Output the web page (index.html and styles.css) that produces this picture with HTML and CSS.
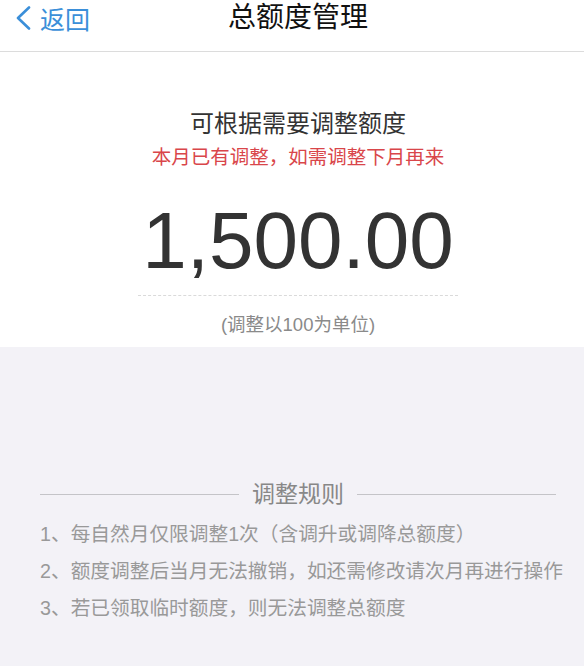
FILE: index.html
```html
<!DOCTYPE html>
<html lang="zh-CN">
    <head>
        <meta charset="UTF-8">
        <meta name="viewport" content="width=device-width, initial-scale=1.0">
        <title>总额度管理</title>
        <link rel="stylesheet" href="styles.css">
    </head>
<body>
    <div class="nav-bar">
        <a class="back-btn" href="#">
            <svg class="back-icon" width="16" height="24" viewBox="0 0 16 24">
                <polyline points="14,1.5 3,12 14,22.5" fill="none" stroke="#3b8fd9" stroke-width="2.6" stroke-linecap="round" stroke-linejoin="round"/>
            </svg>
            <span>返回</span>
        </a>
        <h1 class="nav-title">总额度管理</h1>
        <div></div>
    </div>

    <div class="quota-panel">
        <p class="quota-tip">可根据需要调整额度</p>
        <p class="quota-warn">本月已有调整，如需调整下月再来</p>
        <div class="quota-amount">1,500.00</div>
        <p class="quota-unit">(调整以100为单位)</p>
    </div>

    <div class="rules-panel">
        <div class="rules-title">
            <span class="rules-line"></span>
            <span>调整规则</span>
            <span class="rules-line"></span>
        </div>
        <ul class="rules-list">
            <li>1、每自然月仅限调整1次（含调升或调降总额度）</li>
            <li>2、额度调整后当月无法撤销，如还需修改请次月再进行操作</li>
            <li>3、若已领取临时额度，则无法调整总额度</li>
        </ul>
    </div>
</body>
</html>
```

FILE: styles.css
```css
html {
    overflow: hidden;
    background-color: #f3f2f7;
}
body {
    width: 596px;
    min-height: 666px;
    margin: 0;
    font-family: "Liberation Sans", "Noto Sans CJK SC", sans-serif;
    background-color: #f3f2f7;
    color: #333;
}
p {
    margin: 0;
}
.nav-bar {
    display: grid;
    grid-template-columns: 1fr auto 1fr;
    align-items: start;
    height: 51px;
    background-color: #fff;
    border-bottom: 1px solid #dcdcdc;
}
.back-btn {
    display: flex;
    align-items: center;
    gap: 9px;
    padding-left: 15px;
    height: 36px;
    color: #3b8fd9;
    font-size: 25px;
    text-decoration: none;
}
.back-icon {
    display: block;
}
.nav-title {
    margin: 0;
    font-size: 28px;
    font-weight: normal;
    line-height: 36px;
    color: #111;
}
.quota-panel {
    background-color: #fff;
    padding: 55px 0 10px;
    text-align: center;
}
.quota-tip {
    font-size: 24px;
    line-height: 34px;
    color: #333;
}
.quota-warn {
    margin-top: 2px;
    font-size: 19.5px;
    line-height: 28px;
    color: #d9464a;
}
.quota-amount {
    width: 320px;
    margin: 20px auto 0;
    padding-bottom: 4px;
    font-size: 80px;
    line-height: 100px;
    color: #333;
    border-bottom: 1px dashed #dadada;
}
.quota-unit {
    margin-top: 17px;
    font-size: 18.5px;
    line-height: 24px;
    color: #8a8a8a;
}
.rules-panel {
    padding: 132px 40px 0 40px;
}
.rules-title {
    display: flex;
    align-items: center;
    gap: 13px;
    font-size: 23px;
    line-height: 30px;
    color: #888;
}
.rules-line {
    flex: 1;
    height: 1px;
    background-color: #c4c4c8;
}
.rules-list {
    list-style: none;
    margin: 7px 0 0;
    padding: 0;
    font-size: 19.7px;
    line-height: 37px;
    color: #999;
    white-space: nowrap;
}
```
